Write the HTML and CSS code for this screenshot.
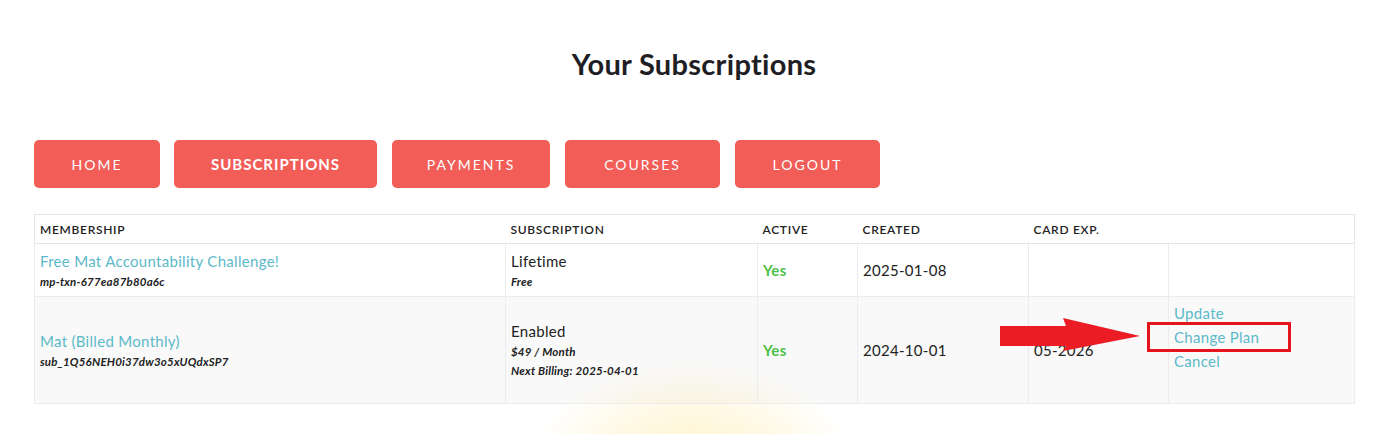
FILE: index.html
```html
<!DOCTYPE html>
<html lang="en">
<head>
<meta charset="utf-8">
<title>Your Subscriptions</title>
<link rel="stylesheet" href="styles.css">
</head>
<body>
<main class="page">
  <h1 class="title">Your Subscriptions</h1>
  <nav class="nav">
    <a class="btn" href="#">Home</a>
    <a class="btn btn-active" href="#">Subscriptions</a>
    <a class="btn" href="#">Payments</a>
    <a class="btn" href="#">Courses</a>
    <a class="btn" href="#">Logout</a>
  </nav>
  <table class="subs">
    <colgroup>
      <col class="c1"><col class="c2"><col class="c3"><col class="c4"><col class="c5"><col class="c6">
    </colgroup>
    <thead>
      <tr>
        <th>Membership</th>
        <th>Subscription</th>
        <th>Active</th>
        <th>Created</th>
        <th>Card Exp.</th>
        <th></th>
      </tr>
    </thead>
    <tbody>
      <tr class="row1">
        <td><a class="link" href="#">Free Mat Accountability Challenge!</a><div class="meta">mp-txn-677ea87b80a6c</div></td>
        <td><div>Lifetime</div><div class="meta">Free</div></td>
        <td class="yes">Yes</td>
        <td>2025-01-08</td>
        <td></td>
        <td></td>
      </tr>
      <tr class="row2">
        <td><a class="link" href="#">Mat (Billed Monthly)</a><div class="meta">sub_1Q56NEH0i37dw3o5xUQdxSP7</div></td>
        <td><div>Enabled</div><div class="meta">$49 / Month</div><div class="meta">Next Billing: 2025-04-01</div></td>
        <td class="yes">Yes</td>
        <td>2024-10-01</td>
        <td>05-2026</td>
        <td class="actions">
          <a class="link act" href="#">Update</a>
          <a class="link act" href="#">Change Plan</a>
          <a class="link act" href="#">Cancel</a>
        </td>
      </tr>
    </tbody>
  </table>
</main>
<svg class="arrow" width="150" height="36" viewBox="0 0 150 36" aria-hidden="true">
  <polygon points="0,8 66,8 63,0 140,18 63,33 66,28 0,28" fill="#ec1c24"/>
</svg>
<div class="highlight"></div>
</body>
</html>
```

FILE: styles.css
```css
* { box-sizing: border-box; }
html, body { margin: 0; padding: 0; }
body {
  font-family: "Lato", "Noto Sans", sans-serif;
  color: #222222;
  width: 1397px;
  height: 434px;
  overflow: hidden;
  position: relative;
  background:
    radial-gradient(ellipse 170px 120px at 693px 480px, #fff1bf 0%, #fff7dc 45%, rgba(255,255,255,0) 100%),
    #ffffff;
}
.page {
  position: relative;
  z-index: 1;
  width: 1320px;
  margin-left: 34px;
  padding-top: 44px;
}
.title {
  margin: 0;
  text-align: center;
  font-size: 29px;
  font-weight: 700;
  line-height: 40px;
  color: #1e1e24;
  letter-spacing: 0.3px;
}
.nav {
  display: flex;
  gap: 15px;
  margin-top: 56px;
}
.btn {
  display: flex;
  align-items: center;
  justify-content: center;
  height: 48px;
  background: #f25d58;
  color: #fff;
  text-decoration: none;
  text-transform: uppercase;
  font-size: 14px;
  letter-spacing: 2px;
  border-radius: 5px;
  padding: 0 30px;
}
.btn-active {
  font-weight: 700;
  letter-spacing: 1px;
  font-size: 15px;
}
.nav .btn:nth-child(1) { width: 126px; }
.nav .btn:nth-child(2) { width: 203px; margin-left: -1px; }
.nav .btn:nth-child(3) { width: 158px; }
.nav .btn:nth-child(4) { width: 155px; }
.nav .btn:nth-child(5) { width: 145px; }
.subs {
  margin-top: 26px;
  width: 1320px;
  border-collapse: collapse;
  table-layout: fixed;
  border: 1px solid #e6e6e6;
}
.c1 { width: 471px; }
.c2 { width: 252px; }
.c3 { width: 100px; }
.c4 { width: 171px; }
.c5 { width: 140px; }
.c6 { width: 186px; }
.subs th {
  text-align: left;
  font-size: 12px;
  font-weight: 600;
  text-transform: uppercase;
  letter-spacing: 0.7px;
  height: 29px;
  padding: 1px 5px 0;
  border-bottom: 1px solid #e6e6e6;
  color: #222;
}
.subs td {
  border: 1px solid #ececec;
  padding: 4px 5px;
  font-size: 15px;
  line-height: 22px;
  vertical-align: middle;
  letter-spacing: 0.3px;
}
.row1 td { height: 53px; }
.row2 td { height: 107px; background: rgba(0, 0, 0, 0.025); }
.link {
  color: #5cb9c9;
  text-decoration: none;
}
.meta {
  font-size: 11.5px;
  font-style: italic;
  font-weight: 700;
  line-height: 19px;
  color: #222;
  letter-spacing: 0.2px;
}
.yes {
  color: #4cc146;
  font-weight: 700;
}
.subs td.actions {
  vertical-align: top;
  padding-top: 4px;
}
.act {
  display: block;
  line-height: 24px;
}
.arrow {
  position: absolute;
  left: 1000px;
  top: 318px;
  z-index: 2;
}
.highlight {
  position: absolute;
  left: 1147px;
  top: 322px;
  width: 144px;
  height: 30px;
  border: 3px solid #e5141d;
  z-index: 2;
}
```
